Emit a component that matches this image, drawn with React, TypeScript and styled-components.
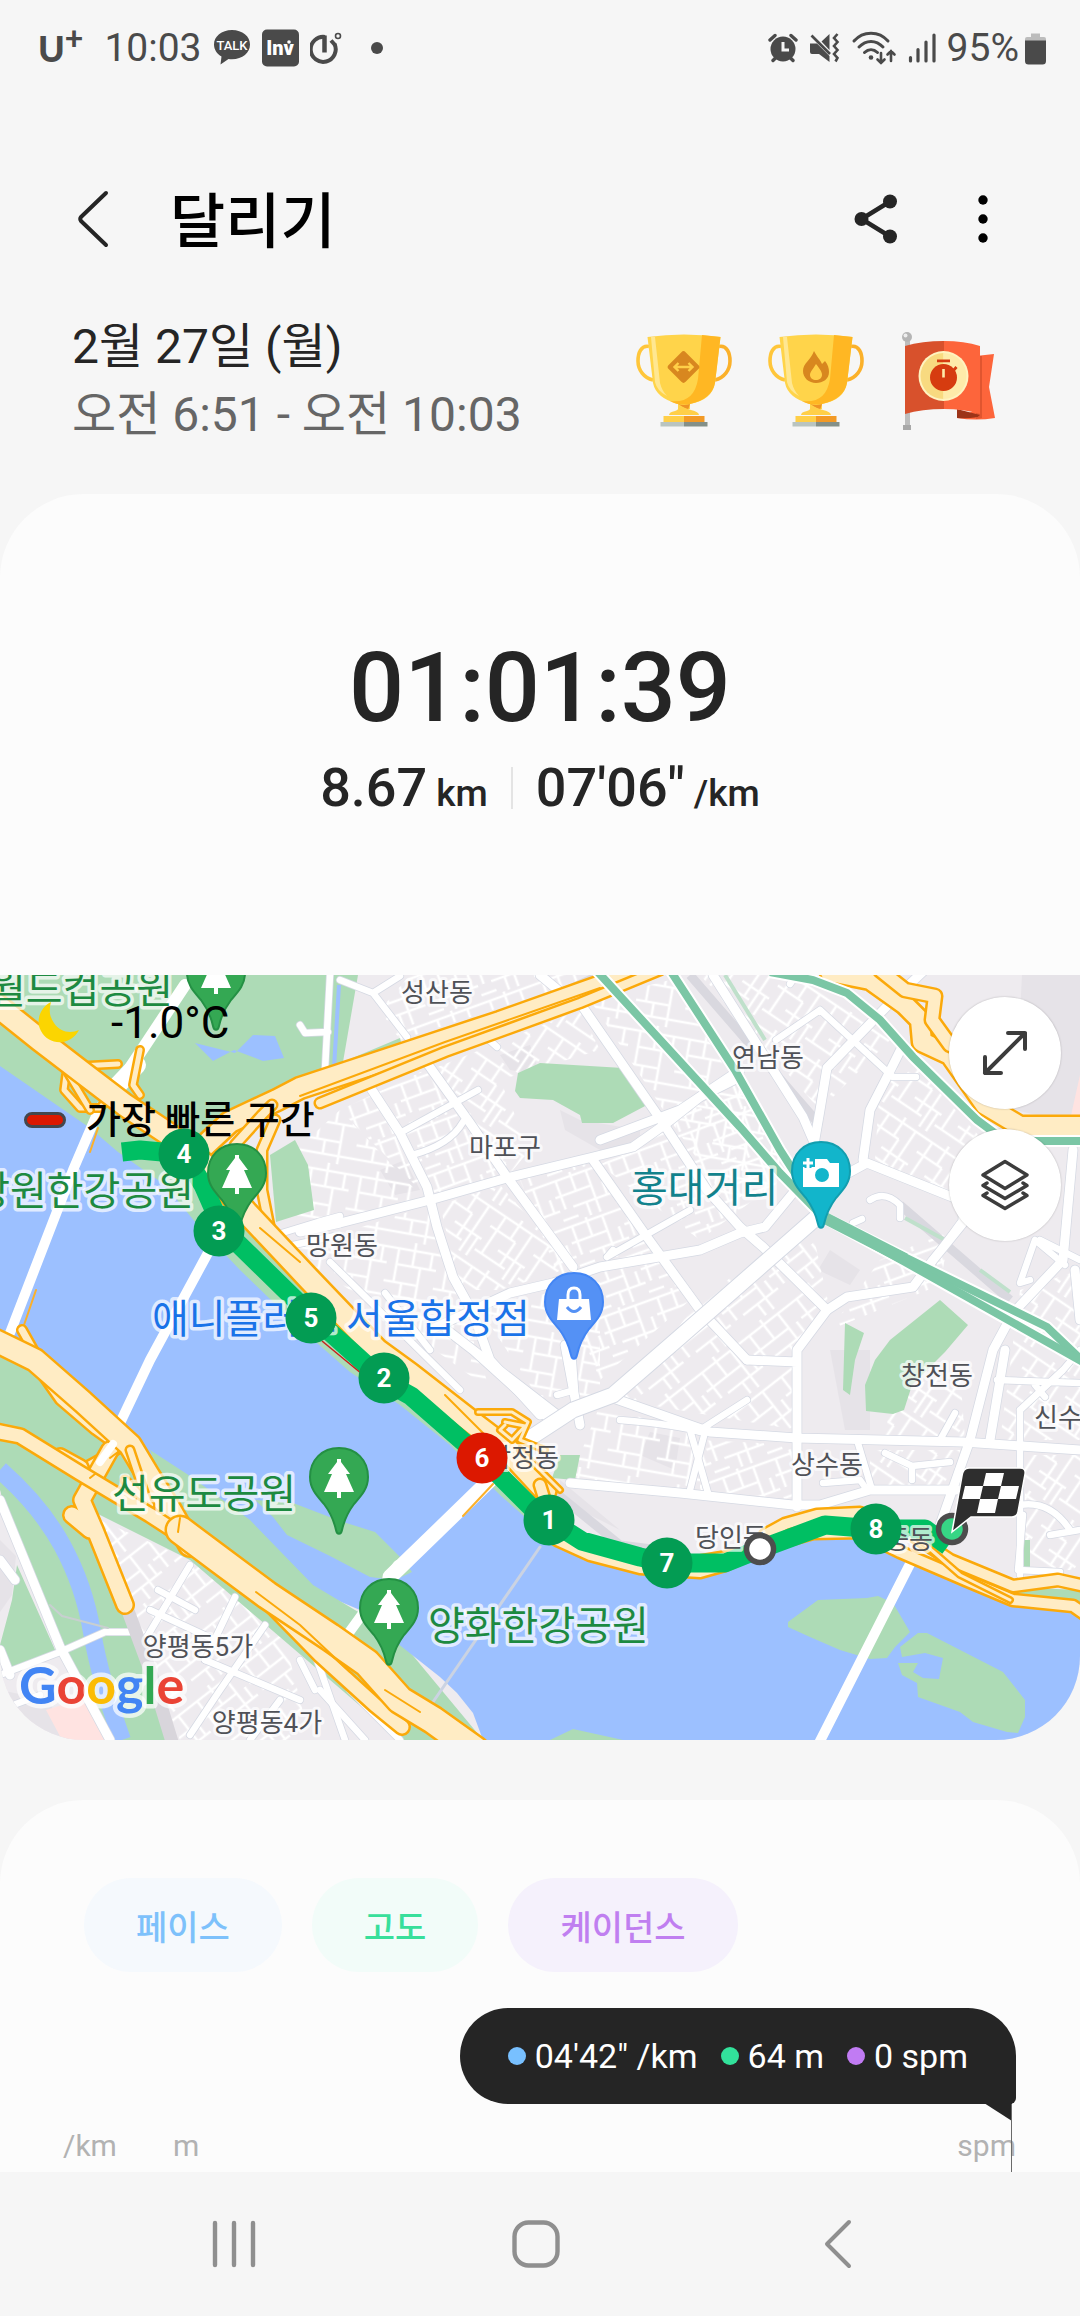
import React from "react";
import styled, { createGlobalStyle } from "styled-components";

const GlobalStyle = createGlobalStyle`
  * { box-sizing: border-box; }
  html, body { margin: 0; padding: 0; background: #f6f6f6; }
  body { font-family: Roboto, "Noto Sans CJK KR", sans-serif; color: #252525; }
  button { font: inherit; color: inherit; background: none; border: 0; padding: 0; margin: 0; cursor: pointer; }
  h1, p, ul, li { margin: 0; padding: 0; list-style: none; font-weight: inherit; }
  svg { display: block; }
`;

const Screen = styled.div`
  display: flex;
  flex-direction: column;
  min-height: 100vh;
  background: #f6f6f6;
`;

/* ---------- status bar ---------- */

const StatusBar = styled.header`
  display: flex;
  align-items: center;
  justify-content: space-between;
  height: 96px;
  padding: 0 34px 0 38px;
  color: #4a4a4a;
  font-size: 39px;
  line-height: 40px;
`;

const StatusGroup = styled.div<{ $gap: number }>`
  display: flex;
  align-items: center;
  gap: ${(p) => p.$gap}px;
`;

const Carrier = styled.span`
  display: flex;
  align-items: flex-start;
  font-family: Lato, sans-serif;
  font-weight: 900;
  font-size: 36px;
  margin-right: 10px;
  sup {
    font-size: 32px;
    line-height: 20px;
  }
`;

/* ---------- title and session info ---------- */

const TitleBar = styled.div`
  display: flex;
  align-items: center;
  padding: 63px 57px 34px 60px;
`;

const IconButton = styled.button<{ $width: number }>`
  display: flex;
  align-items: center;
  justify-content: center;
  width: ${(p) => p.$width}px;
  height: 120px;
`;

const Title = styled.h1`
  flex: 1;
  margin-left: 44px;
  padding-top: 8px;
  font-size: 60px;
  line-height: 80px;
  font-weight: 500;
  color: #000;
`;

const TitleActions = styled.div`
  display: flex;
  gap: 27px;
`;

const SessionInfo = styled.section`
  display: flex;
  align-items: center;
  justify-content: space-between;
  padding: 0 84px 45px 72px;
  font-size: 48px;
  line-height: 68px;
`;

const TimeRange = styled.p`
  color: #666;
`;

const Awards = styled.ul`
  display: flex;
  gap: 36px;
`;

/* ---------- summary card ---------- */

const SummaryCard = styled.section`
  background: #fcfcfc;
  border-radius: 84px;
  overflow: hidden;
`;

const Summary = styled.div`
  display: flex;
  flex-direction: column;
  align-items: center;
  gap: 12px;
  padding: 138px 0 155px;
  font-weight: 500;
`;

const Duration = styled.p`
  font-size: 97px;
  line-height: 112px;
`;

const Stats = styled.div`
  display: flex;
  align-items: center;
  gap: 23px;
`;

const Stat = styled.p`
  font-size: 54px;
  line-height: 64px;
`;

const Unit = styled.span`
  font-size: 37px;
  line-height: 40px;
  margin-left: 9px;
`;

const StatDivider = styled.span`
  width: 2px;
  height: 42px;
  background: #e4e4e4;
`;

/* ---------- map ---------- */

const MapFrame = styled.div`
  position: relative;
  height: 765px;
  overflow: hidden;
`;

const MapLegend = styled.div`
  position: absolute;
  top: 20px;
  left: 24px;
  display: flex;
  flex-direction: column;
  gap: 41px;
  color: #000;
`;

const LegendRow = styled.p<{ $size: number; $weight: number; $gap: number; $indent: number }>`
  display: flex;
  align-items: center;
  gap: ${(p) => p.$gap}px;
  padding-left: ${(p) => p.$indent}px;
  font-size: ${(p) => p.$size}px;
  line-height: 56px;
  font-weight: ${(p) => p.$weight};
`;

const FastestSwatch = styled.span`
  width: 42px;
  height: 16px;
  border: 3px solid #43474d;
  border-radius: 8px;
  background: #dc1800;
`;

const MapControls = styled.div`
  position: absolute;
  top: 22px;
  right: 19px;
  display: flex;
  flex-direction: column;
  gap: 20px;
`;

const MapControl = styled.button`
  display: flex;
  align-items: center;
  justify-content: center;
  width: 112px;
  height: 112px;
  border-radius: 50%;
  background: #fff;
  box-shadow: 0 0 2px rgba(0, 0, 0, 0.25);
`;

/* ---------- chart card ---------- */

const ChartCard = styled.section`
  display: flex;
  flex: 1;
  flex-direction: column;
  margin-top: 60px;
  padding-top: 78px;
  background: #fcfcfc;
  border-radius: 84px 84px 0 0;
`;

const Chips = styled.div`
  display: flex;
  gap: 30px;
  padding: 0 84px;
`;

const Chip = styled.button<{ $color: string; $tint: string }>`
  height: 94px;
  padding: 0 52px;
  border-radius: 47px;
  font-size: 34px;
  font-weight: 500;
  color: ${(p) => p.$color};
  background: ${(p) => p.$tint};
`;

const Chart = styled.div`
  position: relative;
  display: flex;
  flex: 1;
  flex-direction: column;
  padding: 36px 64px 6px 63px;
`;

const Tooltip = styled.div`
  position: relative;
  display: flex;
  align-items: center;
  align-self: flex-end;
  gap: 23px;
  height: 96px;
  padding: 0 48px;
  border-radius: 48px 48px 6px 48px;
  background: #252525;
  color: #fff;
  font-size: 34px;
`;

const TooltipTail = styled.svg`
  position: absolute;
  right: 4px;
  bottom: -17px;
`;

const Reading = styled.span<{ $color: string }>`
  display: flex;
  align-items: center;
  gap: 9px;
  &::before {
    content: "";
    width: 18px;
    height: 18px;
    border-radius: 50%;
    background: ${(p) => p.$color};
  }
`;

const Cursor = styled.span`
  position: absolute;
  right: 68px;
  top: 132px;
  bottom: 0;
  width: 1px;
  background: #6a6a6a;
`;

const AxisUnits = styled.div`
  display: flex;
  gap: 56px;
  margin-top: 22px;
  font-size: 30px;
  line-height: 40px;
  color: #b2b2b2;
  span:last-child { margin-left: auto; }
`;

const NavBar = styled.nav`
  display: grid;
  grid-template-columns: repeat(3, 1fr);
  height: 144px;
  padding: 0 91px 0 83px;
`;

const NavButton = styled.button`
  display: flex;
  align-items: center;
  justify-content: center;
`;

/* ---------- status icons ---------- */

const TalkIcon = () => (
  <svg width="38" height="38" viewBox="0 0 38 38">
    <path d="M19 1C8.500 1 1 7.500 1 15.500c0 5 3 9.500 7.500 12L7.500 35.500l8-5.500c1 .2 2.300.3 3.500.3 10.500 0 18-6.700 18-14.800S29.500 1 19 1z" fill="#4a4a4a" />
    <text x="19" y="20.500" textAnchor="middle" fontSize="13" fontWeight="500" fill="#fff" fontFamily="Roboto">TALK</text>
  </svg>
);

const InvIcon = () => (
  <svg width="37" height="38" viewBox="0 0 37 38">
    <rect width="37" height="37" y="0.500" rx="5" fill="#4a4a4a" />
    <text x="18" y="26" textAnchor="middle" fontSize="20" fontWeight="900" fill="#fff" fontFamily="Roboto">Inv</text>
    <circle cx="27" cy="13" r="1.800" fill="#fff" />
  </svg>
);

const TimerLogo = () => (
  <svg width="32" height="34" viewBox="0 0 32 34" fill="none" stroke="#4a4a4a">
    <path d="M15 6A12.500 12.500 0 1 0 24.500 13" strokeWidth="4" />
    <path d="M14.500 4.500v17" strokeWidth="4.500" />
    <circle cx="28" cy="5" r="2.500" strokeWidth="1.600" />
    <path d="M21 9.500l4.500 5" strokeWidth="4" />
  </svg>
);

const AlarmIcon = () => (
  <svg width="30" height="32" viewBox="0 0 30 32">
    <circle cx="15" cy="17" r="12.500" fill="#4a4a4a" />
    <path d="M2 8l5-4.500M28 8l-5-4.500M5 28.500l3-3M25 28.500l-3-3" stroke="#4a4a4a" strokeWidth="3.400" strokeLinecap="round" />
    <path d="M15 10v8h6" fill="none" stroke="#f6f6f6" strokeWidth="3" />
  </svg>
);

const MuteIcon = () => (
  <svg width="31" height="32" viewBox="0 0 31 32">
    <path d="M1 11.500h7L20.500 24v6L10 22H3a2 2 0 0 1-2-2zM20.500 2v16l-8-8.500z" fill="#4a4a4a" />
    <path d="M2.500 3.500L21 22" stroke="#4a4a4a" strokeWidth="2.600" />
    <path d="M28.500 2l-3.500 4 3.500 4-3.500 4 3.500 4-3.500 4 3.500 4-2 3.500" fill="none" stroke="#4a4a4a" strokeWidth="2.600" />
  </svg>
);

const WifiIcon = () => (
  <svg width="46" height="36" viewBox="0 0 46 36" fill="none" stroke="#4a4a4a" strokeWidth="3" strokeLinecap="round">
    <path d="M3 11c9-10.500 25-10.500 34 0M8 17c7-7.500 17-7.500 24 0M13.500 22.500c4-3.800 9-3.800 13 0" />
    <circle cx="20" cy="27.500" r="2.300" fill="#4a4a4a" stroke="none" />
    <path d="M30 23v10m-3.500-3.500L30 33l3.500-3.500M40 31V21m-3.500 3.500L40 21l3.500 3.500" strokeWidth="2.600" />
  </svg>
);

const SignalIcon = () => (
  <svg width="28" height="32" viewBox="0 0 28 32" stroke="#4a4a4a" strokeWidth="3.200" strokeLinecap="round">
    <path d="M2.500 25.500V29M10 17.500V29M18 10V29M26 3V29" />
  </svg>
);

const BatteryIcon = () => (
  <svg width="21" height="33" viewBox="0 0 21 33">
    <path d="M6 1.500h9V5h4a2 2 0 0 1 2 2v3H0V7a2 2 0 0 1 2-2h4z" fill="#bcbcbc" />
    <path d="M0 8.500h21V29a3.500 3.500 0 0 1-3.500 3.500h-14A3.500 3.500 0 0 1 0 29z" fill="#4a4a4a" />
  </svg>
);

/* ---------- award drawings ---------- */

const Trophy = ({ label, children }: { label: string; children: React.ReactNode }) => (
  <svg width="96" height="100" viewBox="0 0 96 100" role="img" aria-label={label}>
    <path d="M13 15.500C5 14 2 22 2 30c0 9 6 17 15 19" fill="none" stroke="#ffc63a" strokeWidth="3.600" />
    <path d="M83 15.500C91 14 94 22 94 30c0 9-6 17-15 19" fill="none" stroke="#fbb12a" strokeWidth="3.600" />
    <path d="M11.500 6Q48 1 84.500 6L79 52Q76 69 54 73v5H42v-5Q20 67 17 52z" fill="#ffd44a" />
    <path d="M66 4l18.500 2L79 52Q76 68 54 73q-12 2-20-3Q58 73 62 48z" fill="#ffb723" />
    <path d="M15 6h4l5 46q2 8 7 13-10-5-12-14z" fill="#ffe791" />
    <path d="M42 73q6 2 12 0l-2 6z" fill="#ee9326" />
    <path d="M33 84q0-3 6-4 4-1 4-5l12 4q8 2 8 5z" fill="#ffcf48" />
    <path d="M27.500 85H48v6.500H27.500z" fill="#ffcf48" />
    <path d="M48 85h20.500v6.500H48z" fill="#f29a26" />
    <path d="M24.500 91H48v4.500H24.500z" fill="#b9c4c0" />
    <path d="M48 91h23.500v4.500H48z" fill="#849089" />
    {children}
  </svg>
);

const DistanceTrophy = () => (
  <Trophy label="거리 기록">
    <rect x="35.500" y="24" width="24" height="24" rx="3" transform="rotate(45 47.500 36)" fill="#d8871f" />
    <path d="M39 36h17M42.500 32l-4 4 4 4M52.500 32l4 4-4 4" fill="none" stroke="#ffcf48" strokeWidth="2.400" />
  </Trophy>
);

const CalorieTrophy = () => (
  <Trophy label="칼로리 기록">
    <path d="M46 20c3 6 6 8 8 13l3-3c3 4 4 7 4 11 0 7-6 11-13 11s-13-5-13-12c0-8 8-11 11-20z" fill="#d8871f" />
    <path d="M48 33c4 5 6 8 6 11 0 3-3 5-6 5s-6-2-6-5c0-3 3-6 6-11z" fill="#ffcf48" />
  </Trophy>
);

const TimeFlag = () => (
  <svg width="96" height="100" viewBox="0 0 96 100" role="img" aria-label="시간 목표 달성">
    <path d="M5 8h5v86H5z" fill="#bdbdbd" />
    <path d="M3 94h8v5H3z" fill="#a8a8a8" />
    <circle cx="7" cy="6" r="5" fill="#b5b5b5" />
    <circle cx="5.500" cy="4.500" r="2" fill="#eee" />
    <path d="M76 25l18-2-5 33 6 31q-19 3-38 0l19-8z" fill="#fd653b" />
    <path d="M76 25h6v62l-6 1z" fill="#e0552f" />
    <path d="M57 78l23 6q-3 4-23 3z" fill="#9c3418" />
    <path d="M5 15Q22 10 44 10v68Q22 78 5 83z" fill="#d8512c" />
    <path d="M44 10q20 0 36 5v68q-16-5-36-5z" fill="#fd653b" />
    <circle cx="43.500" cy="45" r="25" fill="#fff3c0" />
    <path d="M43.500 22a23 23 0 0 0 0 46z" fill="#f8da80" />
    <path d="M43.500 22a23 23 0 0 1 0 46z" fill="#feebaa" />
    <circle cx="43.500" cy="46.500" r="13.500" fill="#d63c10" />
    <path d="M37 29.800h13M53 40l3.500-4" stroke="#d63c10" strokeWidth="2.800" />
    <path d="M43.500 38v8.500" stroke="#feebaa" strokeWidth="2.600" />
  </svg>
);

/* ---------- map drawing ---------- */

const streets = {
  local: [
    "M340 980L373 993L407 1037M373 993L400 976M800 970L790 984",
    "M820 1010L893 1077L916 1077M776 1040L820 1010",
    "M607 1257L690 1210M607 1257L613 1250",
    "M400 1133L478 1090M412 1155Q450 1145 463 1122",
    "M487 1038L497 1047M708 1493L690 1430M620 1420Q680 1425 700 1432",
    "M960 1223L933 1260M870 1200Q885 1190 900 1205L900 1218M853 1223L862 1219",
    "M1030 1280L1020 1283L1035 1240M1040 1240L1080 1260M1035 1240L1065 1265",
    "M885 1453L912 1466L950 1462M912 1466L912 1480M823 1483L860 1480L867 1490M955 1413L940 1440",
    "M1020 1505Q1050 1500 1070 1530M1050 1535L1080 1530M1023 1515L1018 1570L1060 1572",
    "M997 1380L1080 1383M1020 1410L1020 1575M1020 1410L1063 1370L1080 1350M1035 1385L1045 1397",
    "M857 1440L872 1490M747 1400L700 1430M705 1432L690 1490M557 1395L575 1390L572 1350",
    "M0 1675L60 1652L105 1632L130 1632M0 1710L40 1695M190 1565L145 1640M235 1597L205 1660M265 1625L220 1690L190 1735",
    "M150 1610L215 1640M158 1590L195 1610M205 1660L300 1700M320 1690L365 1740M300 1660L315 1690",
    "M310 1640L345 1740M350 1690L400 1740M250 1740L280 1700M330 975L325 1070M300 1025L305 1033L328 1032",
    "M282 1233L318 1222L340 1216M270 1250L340 1235M330 1262L460 1390M385 1293L430 1350",
  ],
  major: [
    "M300 1232L340 1223L430 1200L507 1178L593 1157L633 1147L667 1123L700 1097L740 1077",
    "M370 1087L400 1133L427 1187L437 1227L453 1277L473 1313L490 1360L540 1415",
    "M427 1063L470 1123L507 1177L573 1267",
    "M580 1003L663 1123L707 1190L740 1227L763 1247L827 1310",
    "M593 1160L647 1237L700 1310L747 1360",
    "M430 1330L510 1293L553 1283L600 1267L700 1250L740 1233L765 1227L793 1193L817 1177",
    "M613 1398L710 1432L797 1438L963 1442L1080 1450",
    "M827 1310L797 1350L797 1507M747 1360L797 1362M827 1310L847 1297L913 1287L933 1260L963 1223L963 1200",
    "M813 1150L820 1110L827 1068L893 1000L930 965M863 1160L870 1110L887 1077L903 1045",
    "M817 1190L867 1163L947 1195L1000 1215",
    "M713 975L803 1117L813 1140M600 1140L680 1110L740 1070",
    "M993 1350L970 1440L940 1525M993 1350L1013 1313L1063 1260L1073 1150M1075 1270L1080 1320",
    "M1005 1350L990 1440M570 1483L680 1493L793 1505L820 1505L870 1490L957 1490",
    "M473 1350L547 1417M447 1330L560 1417M565 1345L580 1425M540 975L570 1000",
    "M0 1500L60 1647L110 1740M0 1650L10 1675M15 1580L0 1560",
  ],
};

const highways: { d: string; w: number }[] = [
  { d: "M110 1096L100 1108L80 1108L64 1090L66 1075L80 1066L118 1064", w: 5 },
  { d: "M140 1050L133 1085L140 1095M90 1110L60 1060L40 1045", w: 5 },
  { d: "M200 1150L230 1122L277 1100L300 1088L400 1055L500 1022L607 984L660 962", w: 20 },
  { d: "M320 1103L445 1052L580 1003L660 970", w: 8 },
  { d: "M235 1145L262 1115L272 1105M272 1240L262 1190L262 1150L275 1120", w: 8 },
  { d: "M-10 1000L40 1040L83 1073L125 1105L167 1133L205 1165L247 1213L310 1280L377 1350L410 1374L473 1423L507 1449L545 1490", w: 21 },
  { d: "M478 1412L512 1412L528 1422L520 1440M505 1425L500 1430L512 1440L525 1426L505 1422M545 1450L520 1440M560 1490L520 1450", w: 3 },
  { d: "M540 1485L557 1540L590 1555L640 1568L700 1572L725 1565L770 1545L813 1533L860 1532L900 1552L970 1582L1013 1600L1073 1606L1090 1618", w: 10 },
  { d: "M765 1535L785 1524L817 1515L860 1513L905 1530L950 1560L1013 1586L1058 1580L1090 1587", w: 10 },
  { d: "M700 1558L760 1548M920 1540L960 1575L1010 1600", w: 3 },
  { d: "M0 1340L25 1350L60 1400L95 1430L120 1448L80 1470M22 1330L40 1362", w: 7 },
  { d: "M80 1468L60 1457M110 1450L82 1500L95 1530L125 1605M72 1515L90 1530", w: 15 },
  { d: "M-10 1338L35 1360L83 1402L130 1445L148 1475L170 1510L190 1545", w: 21 },
  { d: "M130 1450L150 1510M125 1480L150 1505", w: 6 },
  { d: "M-10 1430L20 1436L80 1473L150 1515L190 1541", w: 13 },
  { d: "M266 1600L320 1655L375 1705L402 1727", w: 13 },
  { d: "M180 1530L220 1560L267 1595L330 1637L367 1663L400 1700L433 1720L475 1750", w: 26 },
  { d: "M830 972L870 980L905 1005L920 1020L922 1042L950 1055L985 1105L1020 1126L1090 1126", w: 18 },
  { d: "M880 970L905 990L935 996L932 1020L950 1045", w: 12 },
];

const rails = [
  "M596 970L740 1127L780 1173L823 1217",
  "M670 970L735 1070L780 1150L823 1217",
  "M770 972L813 980L847 993L880 1020L913 1057L977 1120L1000 1137L1020 1141L1090 1141",
  "M823 1217L1047 1327L1090 1368",
  "M823 1217L905 1262L1090 1366",
];

const route = "M122 1152L140 1150L184 1154L203 1185L222 1228L311 1315L350 1350L384 1381L411 1396L482 1458L535 1511L549 1520L582 1541L640 1557L667 1563L725 1563L760 1549L825 1525L876 1529L925 1529L948 1546";

const kilometres = [
  { n: 4, x: 184, y: 1154 },
  { n: 3, x: 219, y: 1231 },
  { n: 5, x: 311, y: 1318 },
  { n: 2, x: 384, y: 1378 },
  { n: 6, x: 482, y: 1458, fastest: true },
  { n: 1, x: 549, y: 1520 },
  { n: 7, x: 667, y: 1563 },
  { n: 8, x: 876, y: 1529 },
];

type Anchor = "start" | "middle" | "end";
type Label = { t: string; x: number; y: number; a: Anchor };

const districts: Label[] = [
  { t: "성산동", x: 437, y: 1002, a: "middle" },
  { t: "마포구", x: 505, y: 1157, a: "middle" },
  { t: "망원동", x: 342, y: 1255, a: "middle" },
  { t: "연남동", x: 768, y: 1067, a: "middle" },
  { t: "창전동", x: 937, y: 1385, a: "middle" },
  { t: "상수동", x: 827, y: 1474, a: "middle" },
  { t: "신수", x: 1034, y: 1427, a: "start" },
  { t: "당인동", x: 695, y: 1547, a: "start" },
  { t: "중동", x: 933, y: 1549, a: "end" },
  { t: "합정동", x: 559, y: 1467, a: "end" },
  { t: "양평동5가", x: 198, y: 1656, a: "middle" },
  { t: "양평동4가", x: 267, y: 1732, a: "middle" },
];

const places: (Label & { c: string })[] = [
  { t: "월드컵공원", x: 173, y: 1003, a: "end", c: "#1d8a41" },
  { t: "망원한강공원", x: 194, y: 1205, a: "end", c: "#1d8a41" },
  { t: "애니플러스 서울합정점", x: 152, y: 1333, a: "start", c: "#1a73e8" },
  { t: "홍대거리", x: 631, y: 1202, a: "start", c: "#12828c" },
  { t: "선유도공원", x: 112, y: 1508, a: "start", c: "#1d8a41" },
  { t: "양화한강공원", x: 428, y: 1640, a: "start", c: "#1d8a41" },
];

const Pin = ({ x, y, fill, edge, children }: { x: number; y: number; fill: string; edge: string; children: React.ReactNode }) => (
  <g transform={`translate(${x} ${y})`}>
    <path d="M0-29C-17-29-29-17-29 0c0 12 7 19 14 27 6 8 10 17 12 26 1 5 5 5 6 0 2-9 6-18 12-26 7-8 14-15 14-27C29-17 17-29 0-29z" fill={fill} stroke={edge} strokeWidth="2" />
    {children}
  </g>
);

const TreePin = ({ x, y }: { x: number; y: number }) => (
  <Pin x={x} y={y} fill="#34a853" edge="#249044">
    <path d="M-2-18h4v3l9 12H7l8 18H2v6h-4v-6h-13l8-18h-4l9-12z" fill="#fff" />
  </Pin>
);

const MapDrawing = () => (
  <svg width="100%" height="100%" viewBox="0 975 1080 765" preserveAspectRatio="xMidYMid slice" role="img" aria-label="달리기 경로 지도">
    <defs>
      <pattern id="blocksA" width="56" height="48" patternUnits="userSpaceOnUse" patternTransform="rotate(-20)">
        <path d="M0 4H56M0 20H38M14 34H56M6 4V34M22 0V20M38 4V48M50 20V34M28 34V48M0 44H16" stroke="#fff" strokeWidth="2.600" fill="none" />
      </pattern>
      <pattern id="blocksB" width="52" height="60" patternUnits="userSpaceOnUse" patternTransform="rotate(34)">
        <path d="M0 6H52M0 22H30M20 38H52M0 50H36M8 6V50M24 0V22M40 6V60M30 22V50M48 38V60" stroke="#fff" strokeWidth="2.600" fill="none" />
      </pattern>
      <pattern id="blocksC" width="50" height="64" patternUnits="userSpaceOnUse" patternTransform="rotate(10)">
        <path d="M0 8H50M10 24H50M0 42H34M0 56H50M10 8V42M26 0V24M34 24V64M44 8V24M18 42V56" stroke="#fff" strokeWidth="2.600" fill="none" />
      </pattern>
      <pattern id="blocksD" width="60" height="52" patternUnits="userSpaceOnUse" patternTransform="rotate(-38)">
        <path d="M0 6H60M0 24H44M16 38H60M8 6V38M26 0V24M44 6V52M54 24V38M34 38V52" stroke="#fff" strokeWidth="2.600" fill="none" />
      </pattern>
    </defs>

    <rect y="975" width="1080" height="765" fill="#eeebef" />

    <g fill="#e6e3e8">
      <path d="M1022 975H1080V1125L1015 1110z" />
      <path d="M500 1055L530 1045L540 1075L510 1070zM380 1170L405 1160L420 1190L395 1195zM560 1110L580 1120L640 1130L640 1145L600 1150L565 1130z" />
      <path d="M830 1250L860 1270L850 1285L818 1270zM650 1432L680 1438L675 1470L640 1455zM830 1350L870 1350L870 1430L845 1430zM560 1480L620 1530L560 1500z" />
    </g>
    <path d="M1080 1075L1070 1120H1080z" fill="#ffe3e1" />

    <path d="M410 975H600L400 1040L380 1010zM340 1110L425 1070L500 1175L430 1200z" fill="url(#blocksA)" />
    <path d="M285 1160L340 1110L425 1200L300 1230zM290 1250L430 1205L460 1300L490 1390L380 1310z" fill="url(#blocksC)" />
    <path d="M430 1070L580 1010L600 1050L500 1080L530 1150L507 1177zM440 1205L500 1185L573 1267L500 1290L460 1290z" fill="url(#blocksB)" />
    <path d="M590 1000L670 980L790 1170L740 1220L670 1120z" fill="url(#blocksC)" />
    <path d="M700 975H800L890 1040L820 1110zM880 1080L910 1060L1010 1170L960 1200L875 1160z" fill="url(#blocksB)" />
    <path d="M520 1180L600 1160L690 1300L600 1380L560 1280zM600 1165L740 1080L780 1180L700 1240z" fill="url(#blocksA)" />
    <path d="M700 1300L810 1220L830 1310L797 1350V1430L620 1400z" fill="url(#blocksD)" />
    <path d="M480 1310L600 1280L600 1400L540 1400zM600 1405L700 1435V1490L570 1480z" fill="url(#blocksC)" />
    <path d="M700 1440L800 1445V1500L700 1490zM830 1330L880 1260L950 1230L940 1285z" fill="url(#blocksA)" />
    <path d="M900 1390L960 1370L965 1440H880zM870 1450H960V1490H870zM1020 1290L1080 1270V1440H1000zM1025 1455H1080V1570H1025z" fill="url(#blocksB)" />
    <path d="M100 1520L190 1560L280 1620L310 1740H180L145 1650z" fill="url(#blocksD)" />

    <path d="M375 1080L600 975M900 1205L1010 1300M690 975L820 1125M540 1480L620 1545L660 1550" fill="none" stroke="#d9d8df" strokeWidth="9" />
    <path d="M725 975L765 1040M905 1218L945 1240M980 1270L1010 1292" fill="none" stroke="#bfe0cb" strokeWidth="4" />

    <g fill="#addbb6">
      <path d="M0 975H358L343 1062L400 1038L402 1046L300 1085L230 1120L205 1165L260 1240L330 1290L420 1400L560 1540L0 1400z" />
      <path d="M270 1155L295 1140L308 1165L314 1210L276 1222z" />
      <path d="M518 1073L540 1063L623 1068L647 1105L613 1123L582 1123L580 1115L553 1100L520 1098L515 1091z" />
      <path d="M940 1300L968 1325L945 1352L912 1385L904 1410L893 1414L866 1411L865 1385L875 1360L890 1340z" />
      <path d="M845 1323L864 1333L855 1360L850 1395L843 1390z" />
      <path d="M560 1455L580 1455L575 1480L552 1478zM1023 1540H1030V1568H1023zM960 1585L1080 1590V1610z" />
      <path d="M0 1357L100 1410L160 1450L240 1500L340 1603L400 1640L483 1740H400L190 1560L90 1510L125 1600L173 1740H110L60 1660L15 1590L0 1490z" />
    </g>
    <path d="M0 1490L14 1545L60 1648L110 1740H0z" fill="#eeebef" />
    <path d="M0 1540L16 1556L12 1595L0 1612z" fill="#e6e3e8" />
    <path d="M17 1565L56 1652L10 1670L0 1645L12 1600z" fill="#addbb6" />
    <path d="M0 1690L48 1700L70 1740H0z" fill="#e6e3e8" />
    <path d="M46 1710L84 1698L104 1740H62z" fill="#ffe3e1" />
    <path d="M195 1043L235 1053L253 1035L275 1036L284 1058L263 1061L234 1050L213 1061z" fill="#9cc0ff" />
    <path d="M339 985L334 1068" stroke="#9cc0ff" strokeWidth="4" />

    {/* river, stream and islands */}
    <path
      d="M0 1066L90 1128L118 1152L165 1185L200 1228L240 1270L300 1328L350 1372L400 1405L450 1445L500 1495L560 1548L640 1570L700 1577L760 1555L820 1538L870 1538L930 1568L1010 1602L1080 1610V1740H483L473 1713L457 1693L440 1677L397 1643L360 1610L313 1590L220 1520L187 1478L157 1460L93 1407L43 1350L0 1335z"
      fill="#9cc0ff"
    />
    <path d="M0 1470Q40 1505 62 1545T92 1632T122 1740" fill="none" stroke="#9cc0ff" strokeWidth="18" />
    <g fill="#addbb6">
      <path d="M150 1450L190 1476L250 1520L313 1585L360 1613L340 1640L180 1530z" />
      <path d="M255 1500L293 1503L340 1521L375 1532L405 1562L412 1572L395 1580L370 1577L330 1556L287 1535L273 1517z" />
      <path d="M788 1622L818 1600L867 1598L878 1596L893 1603L910 1632L895 1647L887 1658L870 1659L840 1650L810 1637L788 1627z" />
      <path d="M900 1647L918 1633L927 1633L1003 1672L1025 1700V1717L1018 1733L1007 1732L973 1722L960 1712L918 1697L917 1683L902 1675L898 1663L918 1663L913 1672L923 1678L939 1679L943 1658L925 1653L902 1657z" />
      <path d="M550 1740L573 1729L623 1740z" />
    </g>

    {/* roads */}
    <g fill="none" strokeLinejoin="round" strokeLinecap="round">
      {streets.local.map((d) => <path key={d} d={d} stroke="#d5d9e3" strokeWidth="8" />)}
      {streets.major.map((d) => <path key={d} d={d} stroke="#d5d9e3" strokeWidth="10.500" />)}
      {streets.local.map((d) => <path key={d} d={d} stroke="#fff" strokeWidth="6.500" />)}
      {streets.major.map((d) => <path key={d} d={d} stroke="#fff" strokeWidth="9" />)}
      <path d="M817 1217L680 1337L650 1363L613 1395L573 1410L527 1440" stroke="#d5d9e3" strokeWidth="17" />
      <path d="M817 1217L680 1337L650 1363L613 1395L573 1410L527 1440" stroke="#fff" strokeWidth="15" />
      <path d="M124 1600L150 1670L173 1745" stroke="#d8d5db" strokeWidth="13" strokeLinecap="butt" />
      <path d="M50 1605L62 1616L108 1628" stroke="#c8cfd0" strokeWidth="2" />
      <path d="M540 1547L433 1702" stroke="#cbd3e2" strokeWidth="3" />
      <path d="M100 1107L73 1170L10 1333M215 1240L150 1360L100 1465M398 1565L340 1645M912 1560L818 1745" stroke="#fff" strokeWidth="10" />
      <path d="M490 1480L390 1577" stroke="#fff" strokeWidth="15" />
      <path d="M185 985L122 1080" stroke="#fff" strokeWidth="12" />
      <path d="M137 1065L118 1085" stroke="#fff" strokeWidth="18" />
      <path d="M493 1484L463 1516M98 1128L90 1152M36 1290L24 1325" stroke="#fbb02a" strokeWidth="2" />
      {highways.map((h) => (
        <g key={h.d}>
          <path d={h.d} stroke="#fba90a" strokeWidth={h.w + 5} />
          <path d={h.d} stroke="#ffecc4" strokeWidth={h.w} />
        </g>
      ))}
      <path d="M300 1096L445 1042L600 988M260 1228L300 1262M445 1395L490 1440M180 1518L178 1532M256 1592L300 1625L350 1672M385 1690L420 1712M110 1458L118 1452M90 1478L95 1474" stroke="#fba90a" strokeWidth="2" />
      <path d="M100 1462L113 1444" stroke="#fff" strokeWidth="8" />
    </g>

    {/* railway lines */}
    <g fill="none">
      {rails.map((d) => <path key={d} d={d} stroke="#fff" strokeWidth="12" />)}
      {rails.map((d) => <path key={d} d={d} stroke="#7bc6a5" strokeWidth="8" />)}
      <path d="M823 1217L905 1259" stroke="#7bc6a5" strokeWidth="12" />
    </g>

    {/* route line, under the place names */}
    <path d={route} fill="none" stroke="#00bf63" strokeWidth="19" strokeLinejoin="round" />
    <path d="M322 1341L362 1374M470 1430" fill="none" stroke="#c8201a" strokeWidth="1.500" />

    {/* place names */}
    <g fontFamily='Roboto, "Noto Sans CJK KR", sans-serif' paintOrder="stroke" stroke="#fff" strokeOpacity="0.7" strokeLinejoin="round">
      <g fontSize="26" fill="#4f5157" strokeWidth="6">
        {districts.map((l) => <text key={l.t} x={l.x} y={l.y} textAnchor={l.a}>{l.t}</text>)}
      </g>
      <g fontSize="40" strokeWidth="7">
        {places.map((l) => <text key={l.t} x={l.x} y={l.y} textAnchor={l.a} fill={l.c}>{l.t}</text>)}
      </g>
      <text x="19" y="1704" fontFamily="Lato, sans-serif" fontSize="52" fontWeight="700" strokeWidth="9">
        <tspan fill="#4285f4">G</tspan><tspan fill="#ea4335">o</tspan><tspan fill="#fbbc05">o</tspan><tspan fill="#4285f4">g</tspan><tspan fill="#34a853">l</tspan><tspan fill="#ea4335">e</tspan>
      </text>
    </g>

    <TreePin x={216} y={973} />
    <TreePin x={237} y={1173} />
    <TreePin x={339} y={1477} />
    <TreePin x={389} y={1608} />
    <Pin x={574} y={1302} fill="#5491f5" edge="#4285f4">
      <path d="M-15-3h30l2 21h-34z" fill="#fff" />
      <path d="M-6-3v-4q0-7 6-7t6 7v4" fill="none" stroke="#fff" strokeWidth="3" />
      <path d="M-7 5q7 9 14 0" fill="none" stroke="#5491f5" strokeWidth="3" />
    </Pin>
    <Pin x={821} y={1171} fill="#12b5cb" edge="#129eaf">
      <path d="M-18-4h12v-8h12l3 4h9v24h-36z" fill="#fff" />
      <circle cx="1" cy="4" r="7" fill="#12b5cb" />
      <path d="M-18-8h10M-13-13v10" stroke="#12b5cb" strokeWidth="7" />
      <path d="M-18-8h10M-13-13v10" stroke="#fff" strokeWidth="3" />
    </Pin>

    {/* kilometre markers and finish flag */}
    {kilometres.map((k) => (
      <g key={k.n}>
        <circle cx={k.x} cy={k.y} r="25.500" fill={k.fastest ? "#dc1800" : "#039c53"} />
        <text x={k.x} y={k.y + 9} textAnchor="middle" fontFamily="Roboto" fontSize="26" fontWeight="700" fill="#fff">{k.n}</text>
      </g>
    ))}
    <circle cx="760" cy="1549" r="13.500" fill="#fff" stroke="#4d4d4d" strokeWidth="5.500" />
    <circle cx="952" cy="1529" r="13.500" fill="#37d685" stroke="#4d4d4d" strokeWidth="5.500" />
    <path
      d="M969 1468h51q6 0 5 6l-7 38q-1 5-6 5h-41l-19 15 10-56q1-8 7-8z"
      fill="#2e2e2e"
      stroke="#fff"
      strokeWidth="1.500"
    />
    <path d="M986 1473h18l-3 13h-18zM965 1486h18l-3 13h-18zM1001 1486h18l-3 13h-18zM980 1499h18l-3 14h-18z" fill="#fff" />
  </svg>
);

const MoonIcon = () => (
  <svg width="42" height="42" viewBox="0 0 42 42">
    <path d="M13 0C3 5-3 18 3 29c7 14 29 16 38-1-9 4-19 2-25-7-5-7-5-14-3-21z" fill="#fbd501" />
  </svg>
);

export default function App() {
  return (
    <>
      <GlobalStyle />
      <Screen>
        <StatusBar>
          <StatusGroup $gap={11}>
            <Carrier>U<sup>+</sup></Carrier>
            <span>10:03</span>
            <TalkIcon />
            <InvIcon />
            <TimerLogo />
            <svg width="46" height="12" viewBox="0 0 46 12"><circle cx="24" cy="6" r="6" fill="#4a4a4a" /></svg>
          </StatusGroup>
          <StatusGroup $gap={11}>
            <AlarmIcon />
            <MuteIcon />
            <WifiIcon />
            <SignalIcon />
            <StatusGroup $gap={6}>
              <span>95%</span>
              <BatteryIcon />
            </StatusGroup>
          </StatusGroup>
        </StatusBar>

        <TitleBar>
          <IconButton $width={66} aria-label="뒤로">
            <svg width="32" height="58" viewBox="0 0 32 58" fill="none" stroke="#252525" strokeWidth="4" strokeLinecap="round" strokeLinejoin="round">
              <path d="M29 3L4 27q-1.500 2 0 4l25 24" />
            </svg>
          </IconButton>
          <Title>달리기</Title>
          <TitleActions>
            <IconButton $width={80} aria-label="공유">
              <svg width="44" height="50" viewBox="0 0 44 50" fill="#252525">
                <path d="M36 7.500L7.500 25 36 42.500" fill="none" stroke="#252525" strokeWidth="4.500" />
                <circle cx="36" cy="7.500" r="7" />
                <circle cx="7.500" cy="25" r="7" />
                <circle cx="36" cy="42.500" r="7" />
              </svg>
            </IconButton>
            <IconButton $width={80} aria-label="더보기">
              <svg width="12" height="50" viewBox="0 0 12 50" fill="#000">
                <circle cx="6" cy="6" r="4.700" />
                <circle cx="6" cy="25" r="4.700" />
                <circle cx="6" cy="44" r="4.700" />
              </svg>
            </IconButton>
          </TitleActions>
        </TitleBar>

        <SessionInfo>
          <div>
            <p>2월 27일 (월)</p>
            <TimeRange>오전 6:51 - 오전 10:03</TimeRange>
          </div>
          <Awards>
            <li><DistanceTrophy /></li>
            <li><CalorieTrophy /></li>
            <li><TimeFlag /></li>
          </Awards>
        </SessionInfo>

        <SummaryCard>
          <Summary>
            <Duration>01:01:39</Duration>
            <Stats>
              <Stat>8.67<Unit>km</Unit></Stat>
              <StatDivider />
              <Stat>07'06"<Unit>/km</Unit></Stat>
            </Stats>
          </Summary>
          <MapFrame>
            <MapDrawing />
            <MapLegend>
              <LegendRow $size={44} $weight={400} $gap={31} $indent={14}><MoonIcon />-1.0°C</LegendRow>
              <LegendRow $size={38} $weight={500} $gap={20} $indent={0}><FastestSwatch />가장 빠른 구간</LegendRow>
            </MapLegend>
            <MapControls>
              <MapControl aria-label="지도 확대">
                <svg width="48" height="48" viewBox="0 0 48 48" fill="none" stroke="#3c3c3c" strokeWidth="4" strokeLinecap="round" strokeLinejoin="round">
                  <path d="M4 44L44 4M27 4h17v16M4 28v16h16" />
                </svg>
              </MapControl>
              <MapControl aria-label="지도 유형">
                <svg width="50" height="52" viewBox="0 0 50 52" fill="none" stroke="#3c3c3c" strokeWidth="3.400" strokeLinecap="round" strokeLinejoin="round">
                  <path d="M25 2.500L47 16 25 29.500 3 16zM7 24l-4 2.500L25 39.500l22-13L43 24M7 34l-4 2.500L25 49.500l22-13L43 34" />
                </svg>
              </MapControl>
            </MapControls>
          </MapFrame>
        </SummaryCard>

        <ChartCard>
          <Chips>
            <Chip $color="#7dc1fb" $tint="#f5f9fd">페이스</Chip>
            <Chip $color="#38df9b" $tint="#f2fcf9">고도</Chip>
            <Chip $color="#c07ff0" $tint="#f5f1fc">케이던스</Chip>
          </Chips>
          <Chart>
            <Tooltip role="status">
              <Reading $color="#78c0ff">04'42" /km</Reading>
              <Reading $color="#32e29b">64 m</Reading>
              <Reading $color="#c17bf3">0 spm</Reading>
              <TooltipTail width="28" height="18" viewBox="0 0 28 18"><path d="M0 0h28v18z" fill="#252525" /></TooltipTail>
            </Tooltip>
            <AxisUnits>
              <span>/km</span>
              <span>m</span>
              <span>spm</span>
            </AxisUnits>
            <Cursor />
          </Chart>
        </ChartCard>

        <NavBar>
          <NavButton aria-label="최근 앱">
            <svg width="44" height="48" viewBox="0 0 44 48" stroke="#8f8f8f" strokeWidth="4.400" strokeLinecap="round">
              <path d="M3 3v42M22 3v42M41 3v42" />
            </svg>
          </NavButton>
          <NavButton aria-label="홈">
            <svg width="48" height="48" viewBox="0 0 48 48" fill="none" stroke="#8f8f8f" strokeWidth="4.400">
              <rect x="2.500" y="2.500" width="43" height="43" rx="14" />
            </svg>
          </NavButton>
          <NavButton aria-label="뒤로 가기">
            <svg width="28" height="50" viewBox="0 0 28 50" fill="none" stroke="#8f8f8f" strokeWidth="4" strokeLinecap="round" strokeLinejoin="round">
              <path d="M25 3L3 25l22 22" />
            </svg>
          </NavButton>
        </NavBar>
      </Screen>
    </>
  );
}
